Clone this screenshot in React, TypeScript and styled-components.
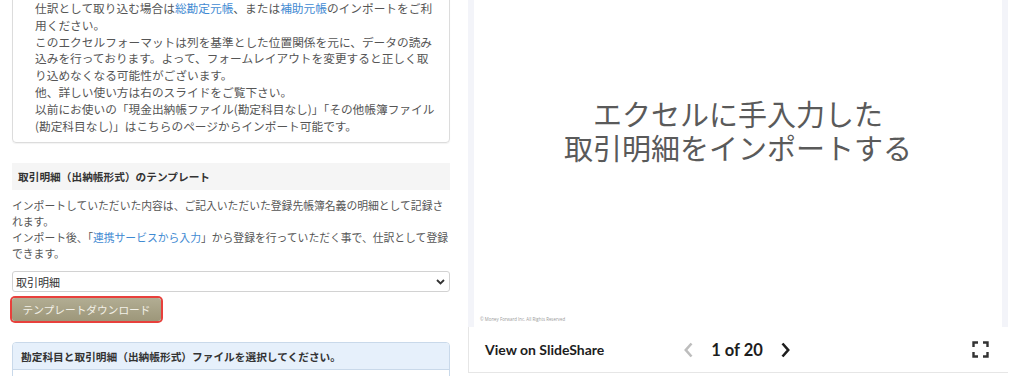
import React from "react";
import styled, { createGlobalStyle } from "styled-components";

const Global = createGlobalStyle`
  html, body { margin: 0; padding: 0; background: #fff; }
  body {
    font-family: "Noto Sans CJK JP", "Noto Sans", sans-serif;
    color: #555;
    overflow: hidden;
  }
  * { box-sizing: border-box; }
`;

const Page = styled.div`
  display: flex;
  align-items: flex-start;
  gap: 18px;
  padding-left: 12px;
  width: 1024px;
  height: 376px;
  overflow: hidden;
`;

const LeftCol = styled.div`
  width: 438px;
  display: flex;
  flex-direction: column;
`;

const Well = styled.div`
  margin-top: -11px;
  border: 1px solid #dcdcdc;
  border-radius: 4px;
  padding: 10px 10px 8px 22px;
  font-size: 11.7px;
  line-height: 16.8px;
  color: #555;
  box-shadow: 0 1px 1px rgba(0, 0, 0, 0.05);
`;

const Link = styled.a`
  color: #3f8ad2;
  text-decoration: none;
`;

const SectionHead = styled.div`
  margin-top: 20px;
  height: 27px;
  background: #f5f5f5;
  padding: 0 6px;
  display: flex;
  align-items: center;
  font-weight: 700;
  font-size: 10.7px;
  color: #333;
`;

const Para = styled.p`
  margin: 7px 0 0;
  font-size: 10.8px;
  line-height: 16px;
  color: #555;
`;

const SelectBox = styled.div`
  margin-top: 10px;
  height: 21px;
  border: 1px solid #d2d2d2;
  border-radius: 3px;
  padding: 0 4px 0 3px;
  display: flex;
  align-items: center;
  justify-content: space-between;
  font-size: 11px;
  color: #333;
`;

const DownloadButton = styled.button`
  margin-top: 6px;
  align-self: flex-start;
  height: 23px;
  width: 149px;
  padding: 0;
  border: none;
  border-radius: 3px;
  background: linear-gradient(#b2ad93, #9d977a);
  color: #f3f1e8;
  font-family: inherit;
  font-size: 10.7px;
  box-shadow: 0 0 0 2px #e8403c;
`;

const Panel = styled.div`
  margin-top: 21px;
  height: 60px;
  border: 1px solid #c9d9ea;
  border-radius: 4px 4px 0 0;
  overflow: hidden;
`;

const PanelHead = styled.div`
  height: 27px;
  background: #e6f0fb;
  border-bottom: 1px solid #c9d9ea;
  padding: 0 8px;
  display: flex;
  align-items: center;
  font-weight: 700;
  font-size: 10.7px;
  color: #333;
`;

const RightCol = styled.div`
  width: 540px;
  display: flex;
  flex-direction: column;
`;

const Frame = styled.div`
  height: 327px;
  background: #f3f4f9;
  padding: 0 6px;
`;

const Slide = styled.div`
  height: 100%;
  background: #fff;
  display: flex;
  flex-direction: column;
  align-items: center;
  padding-top: 96px;
`;

const SlideTitle = styled.div`
  font-size: 29px;
  line-height: 34px;
  color: #5a5a5a;
  text-align: center;
`;

const Copyright = styled.div`
  margin-top: auto;
  align-self: flex-start;
  padding: 0 0 5px 6px;
  font-family: "Open Sans", sans-serif;
  font-size: 4.4px;
  color: #9a9a9a;
`;

const Toolbar = styled.div`
  height: 46px;
  border-left: 1px solid #e6e6e6;
  border-bottom: 1px solid #e6e6e6;
  display: grid;
  grid-template-columns: 1fr auto 1fr;
  align-items: center;
  padding: 0 19px 0 16px;
  font-family: Lato, sans-serif;
  color: #1d1d1d;
`;

const ViewLink = styled.span`
  justify-self: start;
  font-weight: 700;
  font-size: 14px;
`;

const Pager = styled.div`
  display: flex;
  align-items: center;
  gap: 18px;
`;

const PageCount = styled.span`
  font-weight: 700;
  font-size: 16.5px;
`;

const Fullscreen = styled.span`
  justify-self: end;
  display: flex;
`;

const Chevron = ({ dir, color }: { dir: "left" | "right"; color: string }) => (
  <svg width="9" height="16" viewBox="0 0 9 16">
    <polyline
      points={dir === "left" ? "7.5,1.5 1.8,8 7.5,14.5" : "1.5,1.5 7.2,8 1.5,14.5"}
      fill="none"
      stroke={color}
      strokeWidth="2.6"
    />
  </svg>
);

export default function App() {
  return (
    <>
      <Global />
      <Page>
        <LeftCol>
          <Well>
            仕訳として取り込む場合は<Link>総勘定元帳</Link>、または<Link>補助元帳</Link>のインポートをご利用ください。
            <br />
            このエクセルフォーマットは列を基準とした位置関係を元に、データの読み込みを行っております。よって、フォームレイアウトを変更すると正しく取り込めなくなる可能性がございます。
            <br />
            他、詳しい使い方は右のスライドをご覧下さい。
            <br />
            以前にお使いの「現金出納帳ファイル(勘定科目なし)」「その他帳簿ファイル(勘定科目なし)」はこちらのページからインポート可能です。
          </Well>
          <SectionHead>取引明細（出納帳形式）のテンプレート</SectionHead>
          <Para>
            インポートしていただいた内容は、ご記入いただいた登録先帳簿名義の明細として記録されます。
            <br />
            インポート後、「<Link>連携サービスから入力</Link>」から登録を行っていただく事で、仕訳として登録できます。
          </Para>
          <SelectBox>
            <span>取引明細</span>
            <svg width="9" height="6" viewBox="0 0 9 6">
              <polyline points="1,1 4.5,4.5 8,1" fill="none" stroke="#333" strokeWidth="1.8" />
            </svg>
          </SelectBox>
          <DownloadButton>テンプレートダウンロード</DownloadButton>
          <Panel>
            <PanelHead>勘定科目と取引明細（出納帳形式）ファイルを選択してください。</PanelHead>
          </Panel>
        </LeftCol>
        <RightCol>
          <Frame>
            <Slide>
              <SlideTitle>
                エクセルに手入力した
                <br />
                取引明細をインポートする
              </SlideTitle>
              <Copyright>© Money Forward Inc. All Rights Reserved</Copyright>
            </Slide>
          </Frame>
          <Toolbar>
            <ViewLink>View on SlideShare</ViewLink>
            <Pager>
              <Chevron dir="left" color="#bdbdbd" />
              <PageCount>1 of 20</PageCount>
              <Chevron dir="right" color="#1d1d1d" />
            </Pager>
            <Fullscreen>
              <svg width="17" height="17" viewBox="0 0 17 17">
                <path
                  d="M1.5 6V1.5H6 M11 1.5h4.5V6 M15.5 11v4.5H11 M6 15.5H1.5V11"
                  fill="none"
                  stroke="#333"
                  strokeWidth="2.4"
                />
              </svg>
            </Fullscreen>
          </Toolbar>
        </RightCol>
      </Page>
    </>
  );
}
